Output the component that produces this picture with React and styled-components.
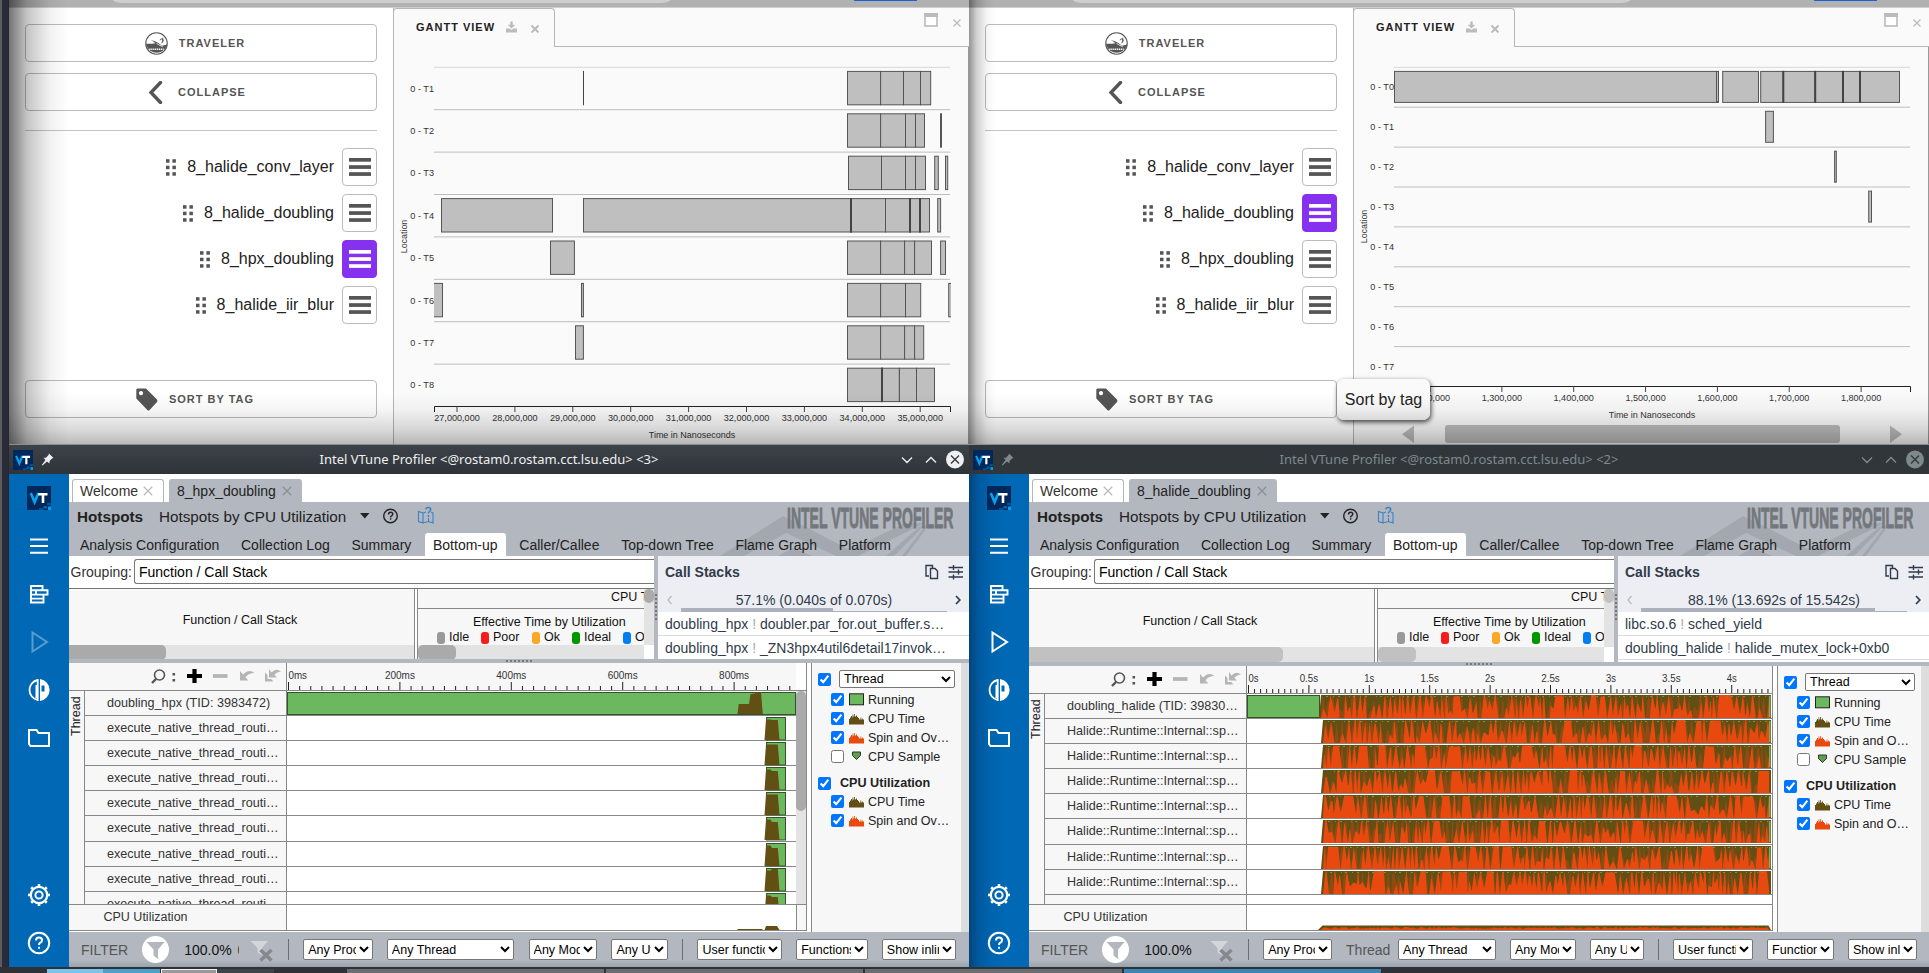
import React from 'react';
import styled, { createGlobalStyle, css } from 'styled-components';

const SANS = '"Liberation Sans", Arial, sans-serif';

const GlobalStyle = createGlobalStyle`
  * { box-sizing: border-box; }
  html, body { margin: 0; padding: 0; overflow: hidden; }
  body { background: #2e3236; font-family: ${SANS}; color: #222; }
  svg { display: block; flex: none; }
`;

/* ---------- desktop ---------- */

const Desktop = styled.div`
  width: 1929px;
  height: 973px;
  display: flex;
  flex-direction: column;
  overflow: hidden;
  background: #2e3236;
`;
const Workspace = styled.div`
  height: 967px;
  display: flex;
  padding-left: 9px;
  background: linear-gradient(to right, #5b5c61 0 2px, #2a2b38 2px 8px, #20212c 9px);
`;
const Column = styled.div`
  width: 960px;
  height: 967px;
  display: flex;
  flex-direction: column;
`;
const Taskbar = styled.div`
  height: 6px;
  padding-top: 2px;
  display: flex;
  background: #2e3236;
`;
const Task = styled.div`
  height: 4px;
  width: ${p => p.$w}px;
  background: ${p => p.$c || 'transparent'};
  ${p => p.$outlined && css`border: 1px solid #eee; border-bottom: 0;`}
`;

/* ---------- browser ---------- */

const Browser = styled.section`
  position: relative;
  height: 445px;
  display: flex;
  flex-direction: column;
  background: #fff;
  border-bottom: 1px solid #8d8d8d;
  overflow: hidden;
`;
const BrowserBar = styled.div`
  height: 8px;
  flex: none;
  display: flex;
  padding-left: 104px;
  background: #b1b1b1;
  border-bottom: 1px solid #cfcfcf;
`;
const AddressField = styled.div`
  width: 557px;
  height: 3px;
  background: #cecece;
  border-radius: 0 0 10px 10px / 0 0 3px 3px;
`;
const BlueButton = styled.div`
  margin-left: 184px;
  width: 63px;
  height: 1px;
  background: #1b62d6;
`;
const BrowserBody = styled.div`
  flex: 1;
  display: flex;
`;
const Shade = styled.div`
  position: absolute;
  inset: 0;
  pointer-events: none;
  background:
    linear-gradient(to right, rgba(0,0,0,${p => p.$left}) 0, rgba(0,0,0,${p => p.$left * 0.42}) ${p => p.$w * 0.3}px, rgba(0,0,0,${p => p.$left * 0.1}) ${p => p.$w * 0.68}px, transparent ${p => p.$w}px),
    linear-gradient(to top, rgba(0,0,0,.27) 0, rgba(0,0,0,.15) 14px, rgba(0,0,0,.04) 34px, transparent 52px);
`;
const Side = styled.aside`
  width: 384px;
  padding: 16px 16px 0;
  display: flex;
  flex-direction: column;
`;
const WideButton = styled.button`
  height: 38px;
  width: 352px;
  flex: none;
  margin: 0 0 11px;
  padding: 0 12px 0 0;
  display: flex;
  align-items: center;
  justify-content: center;
  gap: 11px;
  border: 1px solid #bbb;
  border-radius: 4px;
  background: transparent;
  color: #555;
  font: 600 11px/36px ${SANS};
  letter-spacing: 1px;
`;
const Rule = styled.hr`
  width: 352px;
  height: 1px;
  margin: 8px 0 17px;
  border: 0;
  background: #c4c4c4;
`;
const TagList = styled.div`
  display: flex;
  flex-direction: column;
  gap: 8px;
  height: 232px;
`;
const TagRow = styled.div`
  height: 38px;
  display: flex;
  align-items: center;
  justify-content: flex-end;
`;
const TagName = styled.span`
  font-size: 16px;
  line-height: 38px;
  color: #222;
  margin: 0 8px 0 11px;
`;
const MenuButton = styled.button`
  width: 35px;
  height: 38px;
  padding: 0;
  display: flex;
  align-items: center;
  justify-content: center;
  border-radius: 4px;
  border: 1px solid ${p => (p.$on ? '#8631ef' : '#bbb')};
  background: ${p => (p.$on ? '#8631ef' : '#fff')};
  color: ${p => (p.$on ? '#fff' : '#555')};
`;
const Panel = styled.div`
  width: 576px;
  display: flex;
  flex-direction: column;
  background: #fafafa;
  border-left: 1px solid #b6b6b6;
`;
const PanelTabs = styled.div`
  display: flex;
  height: 39px;
`;
const PanelTab = styled.div`
  width: 162px;
  height: 39px;
  margin-left: -1px;
  padding: 0 0 3px 22px;
  display: flex;
  align-items: center;
  gap: 11px;
  border: 1px solid #b6b6b6;
  border-bottom: 0;
  border-radius: 4px 4px 0 0;
  font: 600 11px ${SANS};
  letter-spacing: 1px;
  color: #222;
`;
const PanelRest = styled.div`
  flex: 1;
  display: flex;
  justify-content: flex-end;
  align-items: flex-start;
  gap: 15px;
  padding: 5px 8px 0 0;
  border-bottom: 1px solid #b6b6b6;
`;
const ChartArea = styled.div`
  flex: 1;
  border-right: 1px solid #999;
`;
const Tooltip = styled.div`
  position: absolute;
  left: 368px;
  top: 379px;
  width: 93px;
  height: 41px;
  border-radius: 7px;
  background: linear-gradient(#fafafa 60%, #efefef);
  box-shadow: 1px 2px 5px rgba(0,0,0,.75);
  font: 16px/41px ${SANS};
  text-align: center;
  color: #222;
`;

const Globe = () => (
  <svg width="23" height="23" viewBox="0 0 24 24">
    <circle cx="12" cy="12" r="11.2" fill="#fff" stroke="#555" strokeWidth="1.2" />
    <path d="M1 12.3 H12 L17 14.5 L23 13 A11.2 11.2 0 0 1 1.2 13Z" fill="#555" />
    <path d="M6 8.500 L10 9.500 L14 11.500 L19 15.500 L13 13 L8 11.500 L11 11 Z" fill="#555" />
    <path d="M12 12 L18.500 15.500" stroke="#fff" strokeWidth=".8" />
    <path d="M15.500 8.500 q2-2.500 3.500-.5 q.5 2-2 3.600 M18.500 6 v5" fill="none" stroke="#555" strokeWidth="1" />
    <path d="M4.500 18 H19.500" stroke="#fff" strokeWidth="1.600" strokeDasharray="1.300 .7" />
  </svg>
);
const Chevron = () => (
  <svg width="23" height="23" viewBox="0 0 23 23"><path d="M16.500 1.500 L7 11.500 L16.500 21.500" fill="none" stroke="#555" strokeWidth="3.400" strokeLinecap="round" /></svg>
);
const TagIcon = () => (
  <svg width="22" height="23" viewBox="0 0 22 23">
    <path fillRule="evenodd" fill="#555" d="M1.5 .5 H10 L21 11.6 Q22 13 21 14 L13.6 22 Q12.5 23 11.4 22 L.3 10.5 V2 Q.3 .5 1.5 .5Z M5 3 a2.1 2.1 0 1 0 .01 0Z" />
  </svg>
);
const Grip = () => (
  <svg width="10" height="17" viewBox="0 0 10 17" fill="#555">
    {[0, 6.5, 13].map(y => [0, 6.4].map(x => <rect key={x + '-' + y} x={x} y={y + .2} width="3.500" height="3.500" />))}
  </svg>
);
const Burger = () => (
  <svg width="22" height="20" viewBox="0 0 22 20" fill="currentColor">
    {[1, 8.2, 15.2].map(y => <rect key={y} y={y} width="22" height="3.700" />)}
  </svg>
);

const TAGS = ['8_halide_conv_layer', '8_halide_doubling', '8_hpx_doubling', '8_halide_iir_blur'];

function Gantt({ g }) {
  const { x0, x1, y0, pitch, rows, barH, barTop, ticks, axisY } = g;
  return (
    <svg width="574" height="396" viewBox="394 47 574 396" fontFamily={SANS} fill="#333">
      {rows.map((r, i) => {
        const y = y0 + i * pitch;
        const t = y + barTop;
        return (
          <g key={r.name}>
            <rect x={x0} y={y - .5} width={x1 - x0} height="1" fill={i ? '#bdbdbd' : '#d8d8d8'} />
            <text x={x0} y={y + pitch / 2 + 3.1} fontSize="9.500" textAnchor="end" textLength="23.700" lengthAdjust="spacingAndGlyphs">{r.name}</text>
            {r.bars.map(([a, b], j) => (
              <rect key={j} x={a} y={t} width={Math.max(b - a, .5)} height={barH} fill="#bfbfbf" stroke="#555" strokeWidth="1" clipPath="url(#plot)" />
            ))}
            {(r.cuts || []).map(([x, w]) => <rect key={x} x={x - w / 2} y={t - .5} width={w} height={barH + 1} fill="#444" />)}
          </g>
        );
      })}
      <clipPath id="plot"><rect x="434" y="60" width="517" height="345" /></clipPath>
      <path d={`M${x0 + .5} ${axisY + 5.5} V${axisY} H${x1 + .5} V${axisY + 5.5}`} fill="none" stroke="#222" />
      {ticks.map(([x, label]) => (
        <g key={label}>
          <rect x={x - .5} y={axisY} width="1" height="5.500" fill="#444" />
          <text x={x} y={axisY + 14.8} fontSize="9.300" textAnchor="middle" textLength={label.length > 9 ? 45.5 : 40.3} lengthAdjust="spacingAndGlyphs">{label}</text>
        </g>
      ))}
      <text x={(x0 + x1) / 2} y={axisY + 31.8} fontSize="9.500" textAnchor="middle" textLength="86.500" lengthAdjust="spacingAndGlyphs">Time in Nanoseconds</text>
      <text transform={`translate(406.500 ${g.locY}) rotate(-90)`} fontSize="9.500" textAnchor="middle" textLength="33.500" lengthAdjust="spacingAndGlyphs">Location</text>
      {g.scroll && (
        <g fill="#bcbcbc">
          <path d="M454 425.500 V443 L442 434.300Z" />
          <rect x="485" y="425" width="395" height="18" rx="3" />
          <path d="M930 425.500 V443 L942 434.300Z" />
        </g>
      )}
    </svg>
  );
}

const chain = (...xs) => xs.slice(1).map((x, i) => [xs[i], x]);
const GANTT_L = {
  x0: 434, x1: 950, y0: 67.3, pitch: 42.4, barTop: 4.1, barH: 33.4, axisY: 406.5, locY: 236.5,
  ticks: [27, 28, 29, 30, 31, 32, 33, 34, 35].map((n, i) => [457 + i * 57.9, `${n},000,000`]),
  rows: [
    { name: '0 - T1', bars: chain(847.5, 880.6, 903.5, 920.5, 930.7), cuts: [[583.5, 1]] },
    { name: '0 - T2', bars: chain(847.5, 880.6, 905.5, 915.5, 924.5), cuts: [[941, 1.8]] },
    { name: '0 - T3', bars: [...chain(848.5, 881.5, 905.5, 915.5, 925.5), [934.7, 938.3], [945.5, 947.7]] },
    { name: '0 - T4', bars: [[441.5, 552.5], ...chain(583.5, 851, 885.5, 910, 920, 929.5), [937.7, 940.6]], cuts: [[851, 2], [910, 2], [920, 2]] },
    { name: '0 - T5', bars: [[550.5, 574.4], ...chain(847.5, 880.6, 904.6, 914.6, 931.5), [940.6, 945.5]] },
    { name: '0 - T6', bars: [[430, 442.5], [581.5, 583.4], ...chain(847.5, 880.6, 905.5, 920.7), [948.7, 955]] },
    { name: '0 - T7', bars: [[575.5, 583.4], ...chain(847.5, 880.6, 904.6, 914.6, 923.7)] },
    { name: '0 - T8', bars: chain(847.5, 882, 899.4, 916.5, 934.5), cuts: [[882, 2]] },
  ],
};
const GANTT_R = {
  x0: 434, x1: 950, y0: 67.3, pitch: 39.9, barTop: 4.1, barH: 31, axisY: 386.5, locY: 226.5, scroll: true,
  ticks: [12, 13, 14, 15, 16, 17, 18].map((n, i) => [470 + i * 71.85, `1,${n - 10}00,000`]),
  rows: [
    { name: '0 - T0', bars: [...chain(434.5, 756.5, 758.5), [762.7, 798.5], ...chain(800.7, 823.3, 855.2, 883, 900, 939.5)], cuts: [[823.3, 2], [855.2, 2], [883, 2], [900, 2]] },
    { name: '0 - T1', bars: [[805.6, 813.4]] },
    { name: '0 - T2', bars: [[874.6, 876.3]] },
    { name: '0 - T3', bars: [[908.7, 911.5]] },
    ...['0 - T4', '0 - T5', '0 - T6', '0 - T7'].map(name => ({ name, bars: [] })),
  ],
};

function Traveler({ active, gantt, tooltip, shade, shadeWidth }) {
  return (
    <Browser>
      <BrowserBar><AddressField /><BlueButton /></BrowserBar>
      <BrowserBody>
        <Side>
          <WideButton><Globe />TRAVELER</WideButton>
          <WideButton><Chevron />COLLAPSE</WideButton>
          <Rule />
          <TagList>
            {TAGS.map(t => (
              <TagRow key={t}>
                <Grip /><TagName>{t}</TagName>
                <MenuButton $on={t === active}><Burger /></MenuButton>
              </TagRow>
            ))}
          </TagList>
          <WideButton><TagIcon />SORT BY TAG</WideButton>
        </Side>
        <Panel>
          <PanelTabs>
            <PanelTab>
              GANTT VIEW
              <svg width="34" height="12" viewBox="0 0 34 12">
                <path d="M0 7.500 H3.500 L5.500 9 L7.500 7.500 H11 V11.500 H0Z M4.300 .5 H6.700 V3.800 H9.300 L5.500 7.500 L1.700 3.800 H4.300Z" fill="#bbb" />
                <path d="M25.500 4.500 L32.500 11.500 M32.500 4.500 L25.500 11.500" stroke="#bbb" strokeWidth="2" />
              </svg>
            </PanelTab>
            <PanelRest>
              <svg width="14" height="14" viewBox="0 0 14 14"><rect x="1" y="1" width="12" height="12" fill="#fff" stroke="#bbb" strokeWidth="1.600" /><rect width="14" height="4" fill="#bbb" /></svg>
              <svg width="8" height="20" viewBox="0 0 8 20"><path d="M.5 6.500 L7.500 13.500 M7.500 6.500 L.5 13.500" stroke="#bbb" strokeWidth="1.300" /></svg>
            </PanelRest>
          </PanelTabs>
          <ChartArea><Gantt g={gantt} /></ChartArea>
        </Panel>
      </BrowserBody>
      {tooltip && <Tooltip>Sort by tag</Tooltip>}
      <Shade $left={shade} $w={shadeWidth} />
    </Browser>
  );
}

/* ---------- profiler window ---------- */

const Window = styled.section`
  height: 522px;
  display: flex;
  flex-direction: column;
  background: #fff;
  font-size: 14px;
`;
const TitleBar = styled.header`
  height: 29px;
  flex: none;
  display: grid;
  grid-template-columns: 60px 1fr 60px;
  align-items: center;
  padding: 0 4px;
  background: ${p => (p.$dim ? '#31363b' : 'linear-gradient(#3d4249, #2f3439)')};
  color: ${p => (p.$dim ? '#7d8a8b' : '#eff0f1')};
  font: 13px/29px "Noto Sans", sans-serif;
`;
const Title = styled.div`
  text-align: center;
  white-space: nowrap;
`;
const TitleIcons = styled.div`
  display: flex;
  align-items: center;
  gap: 8px;
`;
const WindowControls = styled.svg`
  margin-left: -5px;
`;
const WindowBody = styled.div`
  height: 493px;
  display: flex;
`;
const Rail = styled.nav`
  width: 60px;
  display: flex;
  flex-direction: column;
  align-items: center;
  color: #fff;
  background: ${p => (p.$shadow ? 'linear-gradient(to right, #00457b 0, #0059a0 10px, #0064ae 22px, #0068b5 36px)' : '#0068b5')};
`;
const RailItem = styled.div`
  width: 60px;
  height: 48px;
  display: flex;
  align-items: center;
  justify-content: center;
  opacity: ${p => (p.$faded ? 0.35 : 1)};
  margin-top: ${p => (p.$last ? 'auto' : 0)};
`;
const Main = styled.div`
  width: 900px;
  display: flex;
  flex-direction: column;
  overflow: hidden;
`;
const Strip = styled.div`
  height: 28px;
  display: flex;
  align-items: flex-end;
  gap: 5px;
  padding-left: 3px;
  background: #fff;
`;
const FileTab = styled.div`
  height: 23px;
  width: ${p => p.$w}px;
  padding: 0 10px 0 ${p => (p.$on ? 8 : 7)}px;
  display: flex;
  align-items: center;
  justify-content: space-between;
  border-radius: 3px 3px 0 0;
  border: ${p => (p.$on ? '0' : '1px solid #b3b8c0')};
  border-bottom: 0;
  background: ${p => (p.$on ? '#b3b8c0' : '#fff')};
  color: ${p => (p.$on ? '#222' : '#333')};
`;
const Header = styled.div`
  position: relative;
  height: 54px;
  display: flex;
  flex-direction: column;
  background: #b3b8c0;
`;
const Backdrop = styled.svg`
  position: absolute;
  right: 0;
  top: 0;
`;
const HeaderRow = styled.div`
  position: relative;
  height: 31px;
  display: flex;
  align-items: center;
  padding: 0 0 3px 8px;
  font-size: 15.25px;
  white-space: nowrap;
`;
const Bold = styled.b`
  width: 82px;
`;
const ViewTabs = styled.div`
  position: relative;
  height: 23px;
  display: flex;
  gap: 5.7px;
  padding-left: 3px;
`;
const ViewTab = styled.div`
  height: 23px;
  padding: 0 8px;
  line-height: 24px;
  border-radius: 3px 3px 0 0;
  white-space: nowrap;
  background: ${p => (p.$on ? '#fff' : 'transparent')};
`;
const Upper = styled.div`
  height: ${p => p.$h}px;
  flex: none;
  display: flex;
`;
const GridPane = styled.div`
  width: 585px;
  display: flex;
  flex-direction: column;
  overflow: hidden;
  background: #fff;
`;
const Grouping = styled.div`
  height: 32px;
  flex: none;
  padding: 3px 0 4px 1.5px;
  display: flex;
  color: #333;
  line-height: 26px;
`;
const GroupingField = styled.div`
  flex: 1;
  margin-left: 2px;
  height: 25px;
  padding-left: 4px;
  line-height: 25px;
  border: 1px solid #767676;
  border-right: 0;
  border-radius: 3px 0 0 3px;
  color: #000;
`;
const TableHead = styled.div`
  flex: 1;
  display: flex;
  border-top: 1px solid #767676;
  font-size: 12.5px;
  color: #111;
`;
const HeadCell = styled.div`
  width: ${p => p.$w}px;
  flex: none;
  overflow: hidden;
  display: flex;
  flex-direction: column;
  background: #f7f7f7;
  border-right: ${p => (p.$first ? '1px solid #888' : '0')};
  border-left: ${p => (p.$first ? '0' : '1px solid #888')};
  margin-right: ${p => (p.$first ? 2 : 0)}px;
`;
const HeadText = styled.div`
  flex: 1;
  display: flex;
  align-items: center;
  justify-content: center;
  padding: 6px 3px 0 0;
`;
const CpuLine = styled.div`
  height: 20px;
  flex: none;
  padding-left: 193px;
  line-height: 17px;
  white-space: nowrap;
  border-bottom: 1px solid #888;
`;
const EffLine = styled.div`
  padding: 6px 0 0 55px;
  line-height: 15px;
  white-space: nowrap;
`;
const KeyLine = styled.div`
  flex: 1;
  display: flex;
  white-space: nowrap;
  line-height: 15px;
  padding-left: 19px;
`;
const Key = styled.span`
  width: ${p => p.$w}px;
  flex: none;
  display: flex;
  gap: 4px;
  &::before {
    content: '';
    width: 8px;
    height: 12px;
    margin-top: 2px;
    border-radius: 3px;
    background: ${p => p.$c};
  }
`;
const HTrack = styled.div`
  height: 15px;
  flex: none;
  background: #e3e3e3;
  &::before {
    content: '';
    display: block;
    width: ${p => p.$thumb}px;
    height: 15px;
    border-radius: ${p => (p.$flat ? '0 5px 5px 0' : '5px')};
    background: ${p => (p.$light ? '#c1c1c1' : '#aaa')};
  }
`;
const VTrack = styled.div`
  width: 10px;
  flex: none;
  margin-bottom: ${p => p.$mb || 0}px;
  background: #e3e3e3;
  &::before {
    content: '';
    display: block;
    height: ${p => p.$thumb}px;
    border-radius: 5px;
    background: ${p => (p.$light ? '#c1c1c1' : '#aaa')};
  }
`;
const VSplit = styled.div`
  width: 4px;
  flex: none;
  background: #b3b8c0;
  padding: 38px 0 0 1px;
  &::before {
    content: '';
    display: block;
    width: 2px;
    height: 27px;
    background: repeating-linear-gradient(#777 0 2px, transparent 2px 4px);
  }
`;
const HSplit = styled.div`
  height: 4px;
  flex: none;
  background: #b3b8c0;
  padding: 1px 0 0 437px;
  &::before {
    content: '';
    display: block;
    height: 2px;
    width: 26px;
    background: repeating-linear-gradient(to right, #777 0 2px, transparent 2px 4px);
  }
`;
const StackPane = styled.div`
  width: 311px;
  background: #fff;
  color: #2f3b4a;
  overflow: hidden;
`;
const StackHead = styled.div`
  height: 32px;
  padding: 0 6px 0 7px;
  display: flex;
  align-items: center;
  background: #edeef3;
  b { flex: 1; }
`;
const StackNav = styled.div`
  height: 24px;
  display: grid;
  grid-template-columns: 23px 266px 22px;
  grid-template-rows: 24px;
  background: #edeef3;
  justify-items: center;
  align-items: center;
`;
const Progress = styled.div`
  width: 266px;
  height: 24px;
  text-align: center;
  line-height: 24px;
  border-bottom: 1px solid #adb1bd;
  &::after {
    content: '';
    display: block;
    margin-top: -4px;
    height: 3px;
    width: ${p => p.$pct}%;
    background: #adb1bd;
  }
`;
const StackRow = styled.div`
  height: 24px;
  padding: 0 0 0 7px;
  line-height: 24px;
  border-bottom: 1px solid #d9dade;
  white-space: nowrap;
  i { font-style: normal; color: #aaa; }
`;

const Timeline = styled.div`
  flex: 1;
  display: flex;
  background: #fff;
  min-height: 0;
  padding-bottom: 1px;
  font-size: 12.5px;
`;
const TimePane = styled.div`
  width: ${p => p.$w}px;
  flex: none;
  display: flex;
  flex-direction: column;
  border-right: 1px solid #888;
`;
const ToolRow = styled.div`
  height: 28px;
  flex: none;
  display: flex;
  border-bottom: 1px solid #888;
`;
const Tools = styled.div`
  width: 218px;
  border-right: 1px solid #888;
  background: #f7f7f7;
`;
const RowsArea = styled.div`
  flex: 1;
  min-height: 0;
  display: flex;
  border-bottom: 1px solid #888;
`;
const ThreadAxis = styled.div`
  width: 16px;
  flex: none;
  background: #f7f7f7;
  writing-mode: vertical-rl;
  transform: rotate(180deg);
  border-left: 1px solid #888;
  text-align: right;
  line-height: 15px;
  padding-bottom: 5px;
`;
const Rows = styled.div`
  flex: 1;
  overflow: hidden;
`;
const Row = styled.div`
  height: ${p => p.$h}px;
  display: flex;
  border-bottom: 1px solid #888;
`;
const RowName = styled.div`
  width: 202px;
  flex: none;
  padding-left: 22px;
  line-height: 24px;
  overflow: hidden;
  background: #f7f7f7;
  border-right: 1px solid #888;
  white-space: nowrap;
  color: #333;
  font-size: 12.6px;
`;
const CpuRow = styled.div`
  height: 26px;
  flex: none;
  display: flex;
  border-bottom: 1px solid #888;
`;
const CpuName = styled.div`
  width: 218px;
  padding-left: 34.5px;
  line-height: 24px;
  background: #f7f7f7;
  border-right: 1px solid #888;
  color: #333;
`;
const CpuCorner = styled.div`
  flex: 1;
  border-left: 1px solid #888;
  background: #f7f7f7;
`;
const Legend = styled.div`
  flex: 1;
  margin-left: 4px;
  padding: 7px 0 0 6px;
  border-left: 1px solid #888;
  border-right: 8px solid #ddd;
  background: #f7f7f7;
  margin-bottom: -1px;
  color: #222;
`;
const LegendHead = styled.div`
  height: 18px;
  display: flex;
  align-items: center;
  font-weight: bold;
  font-size: 12.6px;
  gap: ${p => (p.$mt ? 9 : 8)}px;
  margin-top: ${p => p.$mt || 0}px;
  margin-bottom: ${p => (p.$mt ? 0 : 2)}px;
`;
const LegendRow = styled.div`
  height: 19px;
  padding-left: 13px;
  display: flex;
  align-items: center;
  gap: 4px;
  white-space: nowrap;
  svg { margin-left: 1px; }
`;
const Check = styled.input`
  width: 13px;
  height: 13px;
  margin: 0;
  flex: none;
`;
const Select = styled.select`
  width: ${p => p.$w}px;
  height: ${p => p.$h || 21}px;
  margin: 0;
  padding: 0;
  flex: none;
  font: 12.5px ${SANS};
  color: #000;
  background: #fff;
  border: 1px solid #767676;
  border-radius: 2px;
`;
const FilterBar = styled.footer`
  height: 35px;
  flex: none;
  display: flex;
  align-items: center;
  gap: 14.2px;
  padding: 0 0 0 12px;
  background: linear-gradient(#b3b8c0 80%, #9aa1aa);
  color: #555;
`;
const FilterInfo = styled.div`
  width: 192.8px;
  flex: none;
  display: flex;
  align-items: center;
  white-space: nowrap;
  svg:first-of-type { margin-left: 14px; }
  svg:last-of-type { margin-left: auto; }
`;
const FilterLabel = styled.span`
  margin-right: -6.5px;
`;
const Percent = styled.span`
  width: 68px;
  padding-left: 15px;
  flex: none;
  color: #111;
`;
const Spill = styled.span`
  width: 1.5px;
  height: 9px;
  line-height: 9px;
  overflow: hidden;
  color: #333;
  flex: none;
`;
const Divider = styled.div`
  width: 1px;
  height: 21px;
  flex: none;
  background: #6a6f76;
`;

const Logo = ({ s }) => (
  <svg width={s} height={s} viewBox="0 0 24 24">
    <rect width="24" height="24" fill="#00285a" />
    <path d="M3.800 7 L7.600 16.200 L11.400 7" fill="none" stroke="#00a6f2" strokeWidth="2.600" />
    <path d="M11.200 8.200 H20.500 M16 8.200 V17" fill="none" stroke="#fff" strokeWidth="2.600" />
    <rect x="21" y="20.500" width="3" height="3.500" fill="#00a3f0" />
    <rect x="20" y="17" width="4" height="2" fill="#00559b" />
    <rect x="16.500" y="20" width="3.500" height="2.500" fill="#0068b5" />
    <rect x="12" y="22" width="4.500" height="2" fill="#00559b" />
  </svg>
);

const gearTeeth = Array.from({ length: 8 }, (_, i) => i * 45);
const RailIcon = ({ kind }) => (
  <svg width="24" height="24" viewBox="0 0 24 24" fill="none" stroke="currentColor" strokeWidth="2">
    {kind === 'menu' && <path d="M3 5.500 H21 M3 12 H21 M3 18.800 H21" />}
    {kind === 'compare' && <path d="M4 4 H15.500 V8.300 H4Z M9 8.300 H20.500 V12.600 H9Z M4 12.600 H16.500 V16.600 H4Z M4 16.600 H16.500 V20.500 H4Z M4 8 V13" strokeWidth="1.900" />}
    {kind === 'play' && <path d="M5.500 2.500 V21.500 L20 12Z" />}
    {kind === 'half' && <>
      <path d="M10.700 2 A10.200 10.200 0 0 0 10.700 22 Z" strokeWidth="1.800" />
      <path d="M13 1 A11.100 11.100 0 0 1 13 23 Z M8.500 7 h2 v13 h-2z" fill="currentColor" stroke="none" />
      <path d="M14.500 7.500 h3 v6 h-3z" fill="#0068b5" stroke="none" />
    </>}
    {kind === 'folder' && <path d="M2 4 H9.500 L11.500 7 H22 V20 H3.500 L2 18Z" />}
    {kind === 'gear' && <>
      <circle cx="12" cy="12" r="8.200" strokeWidth="2.200" /><circle cx="12" cy="12" r="3.600" strokeWidth="2" />
      {gearTeeth.map(a => <path key={a} d="M12 1 V4" strokeWidth="2.600" transform={`rotate(${a} 12 12)`} />)}
    </>}
    {kind === 'help' && <>
      <circle cx="12" cy="12" r="10.200" />
      <path d="M9 9.600 q0-3 3-3 q3 0 3 2.600 q0 1.600-1.700 2.500 q-1.300.8-1.300 2.300" /><path d="M12 15.800 v2" />
    </>}
  </svg>
);

const ToolIcons = () => (
  <svg width="217" height="27" viewBox="69 663 217 27">
    <circle cx="159.500" cy="675" r="5" fill="none" stroke="#555" strokeWidth="1.600" />
    <path d="M156 679 L152 683" stroke="#555" strokeWidth="2.400" />
    <path d="M172.500 673 h2.600 v2.400 h-2.600z M172.500 679 h2.600 v2.400 h-2.600z" fill="#555" />
    <path d="M194.500 669 V683 M187 676 H202" stroke="#000" strokeWidth="4.200" />
    <path d="M213 676 H227.500" stroke="#b5b5b5" strokeWidth="3.800" />
    <g fill="#b5b5b5">
      <path d="M240 671 V680.500 H248.500 L245.500 677.500 Q248 673 254.500 673 Q249 668.500 243 674.500Z" />
      <path d="M269 669 V677.500 H277 L274.500 675 Q276 672 281 671.500 Q276 667.500 271.500 672.500Z" />
      <path d="M265 672.500 V681.500 H273.500 L271 679 H267.500 V675Z" />
    </g>
  </svg>
);

function Ruler({ w, start, step, minor, per, labels }) {
  const marks = [];
  for (let i = 0; start + i * minor < w - 1; i++) marks.push(i);
  return (
    <svg width={w} height="27" viewBox={`0 0 ${w} 27`} fontFamily={SANS} fill="#333">
      <rect width={w} height="27" fill="#f7f7f7" />
      {marks.map(i => <rect key={i} x={start + i * minor - .5} y={i % per ? 23 : 19} width="1" height={i % per ? 4 : 8} fill="#222" />)}
      {labels.map((l, i) => (
        <text key={l} x={i ? start + i * step : 1.5} y="16" fontSize="11.500" textAnchor={i ? 'middle' : 'start'} textLength={l.endsWith('ms') ? (i ? 30 : 18.5) : [0, 10, 10.5, 18.5][l.length - 1]} lengthAdjust="spacingAndGlyphs">{l}</text>
      ))}
    </svg>
  );
}

const GREEN = '#6cb85f';
const BROWN = '#624f13';
const ORANGE = '#e8490f';

function HpxTrack({ i }) {
  if (i === 0) {
    return (
      <svg width="509" height="24" viewBox="287 0 509 24">
        <rect x="287.500" y="1.500" width="508" height="22" fill={GREEN} stroke="#33542b" />
        <path d="M737.500 23 L738.700 13 H749 L750.500 3 L755 2.500 L756 1.500 H761 L762.800 23Z" fill={BROWN} />
      </svg>
    );
  }
  const t = [5, 4, 3.5, 5, 3.5, 6, 6, 2][i % 8];
  return (
    <svg width="509" height="25" viewBox="287 0 509 25">
      <rect x="766.500" y="1.500" width="19" height="22.500" fill={GREEN} stroke="#33542b" />
      <path d={`M764.500 24 L766 3.500 H770.500 L772 ${t} H777.800 L779.500 24Z`} fill={BROWN} />
    </svg>
  );
}

function randomizer(seed) {
  let s = seed * 7919 + 13;
  const next = () => {
    s = (s * 1103515245 + 12345) % 2147483648;
    return s / 2147483648;
  };
  for (let i = 0; i < 5; i++) next();
  return next;
}

function spikes(x0, x1, h, rnd, wide) {
  let d = `M${x0} ${h}`;
  let x = x0;
  while (x < x1) {
    const plateau = wide && rnd() > 0.9;
    const valley = rnd() < 0.13;
    const up = plateau ? 4 + rnd() * 8 : rnd() * 1.3;
    const gap = wide && valley ? 2 + rnd() * 5 : rnd() * 0.9;
    const top = plateau || rnd() > 0.4 ? 0.5 + rnd() * 2 : h * (0.15 + rnd() * 0.55);
    const low = valley || rnd() > 0.55 ? h : h * (0.55 + rnd() * 0.4);
    const rise = 0.8 + rnd() * 2.4;
    const fall = 0.8 + rnd() * 2.4;
    d += ` L${(x + rise).toFixed(1)} ${top.toFixed(1)} L${(x + rise + up).toFixed(1)} ${top.toFixed(1)} L${(x + rise + fall + up).toFixed(1)} ${low.toFixed(1)}`;
    x += rise + fall + up + gap;
    d += ` L${x.toFixed(1)} ${low.toFixed(1)}`;
  }
  return `${d} L${x} ${h}Z`;
}

function HalideTrack({ i }) {
  const rnd = randomizer(i + 3);
  const s = i === 0 ? 359 : 361;
  return (
    <svg width="525" height="24" viewBox="287 0 525 24">
      <clipPath id={`row${i}`}><rect x={s + .5} y="1" width={809 - s} height="23" /></clipPath>
      {i === 0 && <rect x="287.500" y="1.500" width="72" height="22" fill={GREEN} stroke="#33542b" />}
      <path d={`M${s} 24 L${s + 2} 1 H811 V24Z`} fill={BROWN} />
      <g clipPath={`url(#row${i})`}>
        <path d={spikes(s + 2, 809, 24, rnd, false)} fill="#b04a12" opacity=".6" />
        <path d={spikes(s + 2, 809, 24, rnd, true)} fill={ORANGE} />
      </g>
      <path d="M366 2.500 H808" stroke="#5d9a4b" strokeWidth="1" strokeDasharray="2 5 1 4 2 9 1 3" strokeDashoffset={i * 5} />
      <rect x="809" y="2" width="1.500" height="21" fill={i % 4 === 3 ? BROWN : GREEN} />
    </svg>
  );
}

function Utilization({ kind }) {
  if (kind === 'hpx') {
    return (
      <svg width="509" height="25" viewBox="287 0 509 25">
        <path d="M737.500 25 V24 H762.500 V25Z M764.500 25 L766 21 H777 L779.500 25Z" fill={BROWN} />
      </svg>
    );
  }
  const rnd = randomizer(41);
  let d = 'M361 25';
  for (let x = 362; x < 809; x += 2) d += ` L${x} ${(22 + rnd() * 1.8).toFixed(1)}`;
  return (
    <svg width="525" height="25" viewBox="287 0 525 25">
      <path d="M358 25 L362.500 20.500 H808.500 L811 25Z" fill={BROWN} />
      <path d={`${d} L809 25Z`} fill={ORANGE} />
    </svg>
  );
}

const Swatch = ({ kind }) => (
  <svg width="15" height="13" viewBox="0 0 15 13">
    {kind === 'run' && <rect x=".5" y=".8" width="14" height="11" fill={GREEN} stroke="#222" />}
    {(kind === 'cpu' || kind === 'spin') && <path fill={kind === 'cpu' ? BROWN : ORANGE} d="M0 12.500 V7 H1 V5.500 H2 V4 H3 V5.500 H3.500 V2.500 H4.300 V4.500 H5.200 V2 H6 V4.500 H7 V3.500 H8 V5 H9 V6 H10 V7.500 H11.500 V5.500 H12.300 V7.500 H13.300 V6.500 H14 V7.500 H15 V12.500Z" />}
    {kind === 'sample' && <path d="M3.500 2 H11.500 V5.500 L7.500 9.500 L3.500 5.500Z" fill="#5fa04e" stroke="#333" />}
  </svg>
);

const Cross = ({ c }) => (
  <svg width="10" height="10" viewBox="0 0 10 10"><path d="M.8 .8 L9.200 9.200 M9.200 .8 L.8 9.200" stroke={c} strokeWidth="1.300" /></svg>
);

const VIEWS = ['Analysis Configuration', 'Collection Log', 'Summary', 'Bottom-up', 'Caller/Callee', 'Top-down Tree', 'Flame Graph', 'Platform'];

function Profiler({ w }) {
  const r = w.halide;
  const heights = [25, 25, 25, 25, 25, 26, 25, 25, r ? 60 : 40];
  return (
    <Window>
      <TitleBar $dim={r}>
        <TitleIcons>
          <Logo s={20} />
          <svg width="13" height="13" viewBox="0 0 13 13" fill="currentColor"><path d="M8 .5 L12.500 5 L11 5.500 L8.500 8 L8.500 10.500 L6 8.500 L1.500 12.500 L.8 12 L4.500 7 L2.500 4.800 L5 4.800 L7.500 2Z" /></svg>
        </TitleIcons>
        <Title>{w.title}</Title>
        <WindowControls width="68" height="20" viewBox="0 0 68 20" fill="none" stroke="currentColor" strokeWidth="1.300">
          <path d="M2 7.500 L7 12.500 L12 7.500 M26 12.500 L31 7.500 L36 12.500" />
          <circle cx="55" cy="9.500" r="9" fill="currentColor" stroke="none" />
          <path d="M51 5.500 L59 13.500 M59 5.500 L51 13.500" stroke="#31363b" />
        </WindowControls>
      </TitleBar>
      <WindowBody>
        <Rail $shadow={r}>
          <RailItem><Logo s={24} /></RailItem>
          <RailItem><RailIcon kind="menu" /></RailItem>
          <RailItem><RailIcon kind="compare" /></RailItem>
          <RailItem $faded={!r}><RailIcon kind="play" /></RailItem>
          <RailItem><RailIcon kind="half" /></RailItem>
          <RailItem><RailIcon kind="folder" /></RailItem>
          <RailItem $last><RailIcon kind="gear" /></RailItem>
          <RailItem><RailIcon kind="help" /></RailItem>
        </Rail>
        <Main>
          <Strip>
            <FileTab $w={92}>Welcome<Cross c="#bbb" /></FileTab>
            <FileTab $on $w={w.tabWidth}>{w.tab}<Cross c="#8b9098" /></FileTab>
          </Strip>
          <Header>
            <Backdrop width="260" height="54" viewBox="709 502 260 54">
              <path d="M720 556 L783 516 L806 527 L850 550 L905 523 L925 523 L858 556 H836 L786 533 L744 556Z" fill="#a3a8b0" />
              <path d="M778 556 L793 548 L812 556Z" fill="#a3a8b0" />
              <path d="M886 556 L920 526 L924 526 L894 556Z M902 556 L926 525 L929 525 L906 556Z" fill="#a3a8b0" />
              <text x="787" y="527.800" fontFamily={SANS} fontWeight="bold" fontSize="29" textLength="166.500" lengthAdjust="spacingAndGlyphs" fill="#73777c" stroke="#73777c" strokeWidth=".9">INTEL VTUNE PROFILER</text>
            </Backdrop>
            <HeaderRow>
              <Bold>Hotspots</Bold>Hotspots by CPU Utilization
              <svg width="90" height="20" viewBox="347 506 90 20" fill="none">
                <path d="M361 513 H370.500 L365.800 518.500Z" fill="#222" />
                <circle cx="391.500" cy="516" r="6.800" stroke="#222" strokeWidth="1.400" />
                <path d="M389.500 514.500 q0-2.300 2.100-2.300 q2.200 0 2.200 1.900 q0 1-1.200 1.700 q-1 .6-1 1.600 M391.600 518.300 v1.500" stroke="#222" strokeWidth="1.400" />
                <path d="M419.500 511.500 L424 513 V523 L419.500 521.500Z M424 513 L427 512 M424 523 L429.500 521.500 L434 523 V513 L432 512.300 M429.500 518 V521.500" stroke="#3b82c4" strokeWidth="1.100" />
                <path d="M427 509.500 q0-2 2.200-2 q2.500 0 2.500 2 q0 1.300-1.300 2.200 q-1 .7-1 1.800 M429.400 515 v2" stroke="#3b82c4" strokeWidth="1.500" />
              </svg>
            </HeaderRow>
            <ViewTabs>{VIEWS.map(v => <ViewTab key={v} $on={v === 'Bottom-up'}>{v}</ViewTab>)}</ViewTabs>
          </Header>
          <Upper $h={r ? 106 : 103}>
            <GridPane>
              <Grouping>Grouping:<GroupingField>Function / Call Stack</GroupingField></Grouping>
              <TableHead>
                <HeadCell $first $w={346}>
                  <HeadText>Function / Call Stack</HeadText>
                  <HTrack $flat $light={r} $thumb={r ? 254 : 97} />
                </HeadCell>
                <HeadCell $w={227}>
                  <CpuLine>CPU Time</CpuLine>
                  <EffLine>Effective Time by Utilization</EffLine>
                  <KeyLine>
                    <Key $w={44} $c="#999">Idle</Key>
                    <Key $w={51} $c="#f41c1c">Poor</Key>
                    <Key $w={40} $c="#f9a825">Ok</Key>
                    <Key $w={51} $c="#009600">Ideal</Key>
                    <Key $w={60} $c="#007ff0">Over</Key>
                  </KeyLine>
                  <HTrack $light={r} $thumb={38} />
                </HeadCell>
                <VTrack $thumb={14} $light={r} $mb={15} />
              </TableHead>
            </GridPane>
            <VSplit />
            <StackPane>
              <StackHead>
                <b>Call Stacks</b>
                <svg width="38" height="16" viewBox="925 564 38 16" fill="none" stroke="#2f3b4a" strokeWidth="1.400">
                  <path d="M929 576 H926 V565.500 H932.500 V568 M930.500 568.500 H935 L937.500 571 V578.500 H930.500Z" />
                  <path d="M948.500 567.500 H963 M948.500 572 H963 M948.500 577 H963 M953.500 565 V570 M958.500 569.500 V574.500 M953.500 574.500 V579.500" />
                </svg>
              </StackHead>
              <StackNav>
                <svg width="8" height="10" viewBox="0 0 8 10"><path d="M5.500 1 L2 5 L5.500 9" fill="none" stroke="#bbb" strokeWidth="1.300" /></svg>
                <Progress $pct={w.pct}>{w.share}</Progress>
                <svg width="8" height="10" viewBox="0 0 8 10"><path d="M2 1 L5.800 5 L2 9" fill="none" stroke="#2f3b4a" strokeWidth="1.700" /></svg>
              </StackNav>
              {w.stack.map(([a, b]) => <StackRow key={b}>{a} <i>!</i> {b}</StackRow>)}
            </StackPane>
          </Upper>
          <HSplit />
          <Timeline>
            <TimePane $w={r ? 744 : 738}>
              <ToolRow>
                <Tools><ToolIcons /></Tools>
                <Ruler {...w.ruler} />
              </ToolRow>
              <RowsArea>
                <ThreadAxis>Thread</ThreadAxis>
                <Rows>
                  {heights.map((h, i) => (
                    <Row key={i} $h={h}>
                      <RowName>{i === 0 ? w.first : r && i === 8 ? '' : w.thread}</RowName>
                      {r ? i < 8 && <HalideTrack i={i} /> : <HpxTrack i={i} />}
                    </Row>
                  ))}
                </Rows>
                {!r && <VTrack $thumb={120} />}
              </RowsArea>
              <CpuRow>
                <CpuName>CPU Utilization</CpuName>
                <Utilization kind={r ? 'halide' : 'hpx'} />
                {!r && <CpuCorner />}
              </CpuRow>
            </TimePane>
            <Legend>
              <LegendHead>
                <Check type="checkbox" defaultChecked />
                <Select $w={r ? 110 : 116} $h={18}><option>Thread</option></Select>
              </LegendHead>
              <LegendRow><Check type="checkbox" defaultChecked /><Swatch kind="run" />Running</LegendRow>
              <LegendRow><Check type="checkbox" defaultChecked /><Swatch kind="cpu" />CPU Time</LegendRow>
              <LegendRow><Check type="checkbox" defaultChecked /><Swatch kind="spin" />{w.spin}</LegendRow>
              <LegendRow><Check type="checkbox" /><Swatch kind="sample" />CPU Sample</LegendRow>
              <LegendHead $mt={8}><Check type="checkbox" defaultChecked />CPU Utilization</LegendHead>
              <LegendRow><Check type="checkbox" defaultChecked /><Swatch kind="cpu" />CPU Time</LegendRow>
              <LegendRow><Check type="checkbox" defaultChecked /><Swatch kind="spin" />{w.spin}</LegendRow>
            </Legend>
          </Timeline>
          <FilterBar>
            <FilterInfo>
              FILTER
              <svg width="27" height="27" viewBox="0 0 27 27">
                <circle cx="13.500" cy="13.500" r="13.500" fill="#fff" />
                <path d="M4.500 6 H22.500 L16 13.500 V23 L11.500 19.500 V13.500Z" fill="#b3b8c0" />
              </svg>
              <Percent>100.0%</Percent>
              {!r && <Spill>(</Spill>}
              <svg width="24" height="24" viewBox="0 0 24 24">
                <path d="M.5 3 H18 L12 10 V17 L7.500 14.500 V10Z" fill="#d3d6da" />
                <path d="M10.500 12 L21.500 22.500 M21.500 12 L10.500 22.500" stroke="#85888c" strokeWidth="3.600" />
              </svg>
            </FilterInfo>
            {w.filters.map((f, i) => {
              if (f === '|') return <Divider key={i} />;
              if (typeof f === 'string') return <FilterLabel key={i}>{f}</FilterLabel>;
              return <Select key={i} $w={f[1]}><option>{f[0]}</option></Select>;
            })}
          </FilterBar>
        </Main>
      </WindowBody>
    </Window>
  );
}

const HPX = {
  title: 'Intel VTune Profiler <@rostam0.rostam.cct.lsu.edu> <3>',
  tab: '8_hpx_doubling', tabWidth: 133, pct: 57.1, share: '57.1% (0.040s of 0.070s)',
  stack: [['doubling_hpx', 'doubler.par_for.out_buffer.s…'], ['doubling_hpx', '_ZN3hpx4util6detail17invok…']],
  ruler: { w: 509, start: 1.5, step: 111.4, minor: 11.14, per: 10, labels: ['0ms', '200ms', '400ms', '600ms', '800ms'] },
  first: 'doubling_hpx (TID: 3983472)', thread: 'execute_native_thread_routi…', spin: 'Spin and Ov…',
  filters: ['|', ['Any Process', 69.5], ['Any Thread', 127.5], ['Any Module', 68.7], ['Any Utilization', 56.7], '|', ['User functions + 1', 84.5], ['Functions only', 71.5], ['Show inline functions', 73.7]],
};
const HALIDE = {
  halide: true,
  title: 'Intel VTune Profiler <@rostam0.rostam.cct.lsu.edu> <2>',
  tab: '8_halide_doubling', tabWidth: 148, pct: 88.1, share: '88.1% (13.692s of 15.542s)',
  stack: [['libc.so.6', 'sched_yield'], ['doubling_halide', 'halide_mutex_lock+0xb0']],
  ruler: { w: 525, start: 1.5, step: 60.4, minor: 6.04, per: 10, labels: ['0s', '0.5s', '1s', '1.5s', '2s', '2.5s', '3s', '3.5s', '4s'] },
  first: 'doubling_halide (TID: 39830…', thread: 'Halide::Runtime::Internal::sp…', spin: 'Spin and O…',
  filters: ['|', ['Any Process', 68.7], 'Thread', ['Any Thread', 97.7], ['Any Module', 65.7], ['Any Utilization', 53.7], '|', ['User functions + 1', 80], ['Functions only', 66.7], ['Show inline functions', 69]],
};

export default function App() {
  return (
    <Desktop>
      <GlobalStyle />
      <Workspace>
        <Column>
          <Traveler active="8_hpx_doubling" gantt={GANTT_L} shade={0.55} shadeWidth={60} />
          <Profiler w={HPX} />
        </Column>
        <Column>
          <Traveler active="8_halide_doubling" gantt={GANTT_R} shade={0.42} shadeWidth={26} tooltip />
          <Profiler w={HALIDE} />
        </Column>
      </Workspace>
      <Taskbar>
        <Task $w={47} />
        <Task $w={56} $c="#7cc4ea" />
        <Task $w={57} $c="#4f9fcb" />
        <Task $w={1} />
        <Task $w={56} $c="#9a9a9a" $outlined />
        <Task $w={57} $c="#3e4347" />
        <Task $w={73} />
        <Task $w={257} $c="#6b6f71" />
        <Task $w={2} />
        <Task $w={257} $c="#6b6f71" />
        <Task $w={2} />
        <Task $w={257} $c="#6b6f71" />
        <Task $w={2} />
        <Task $w={257} $c="#3c86b5" />
      </Taskbar>
    </Desktop>
  );
}
